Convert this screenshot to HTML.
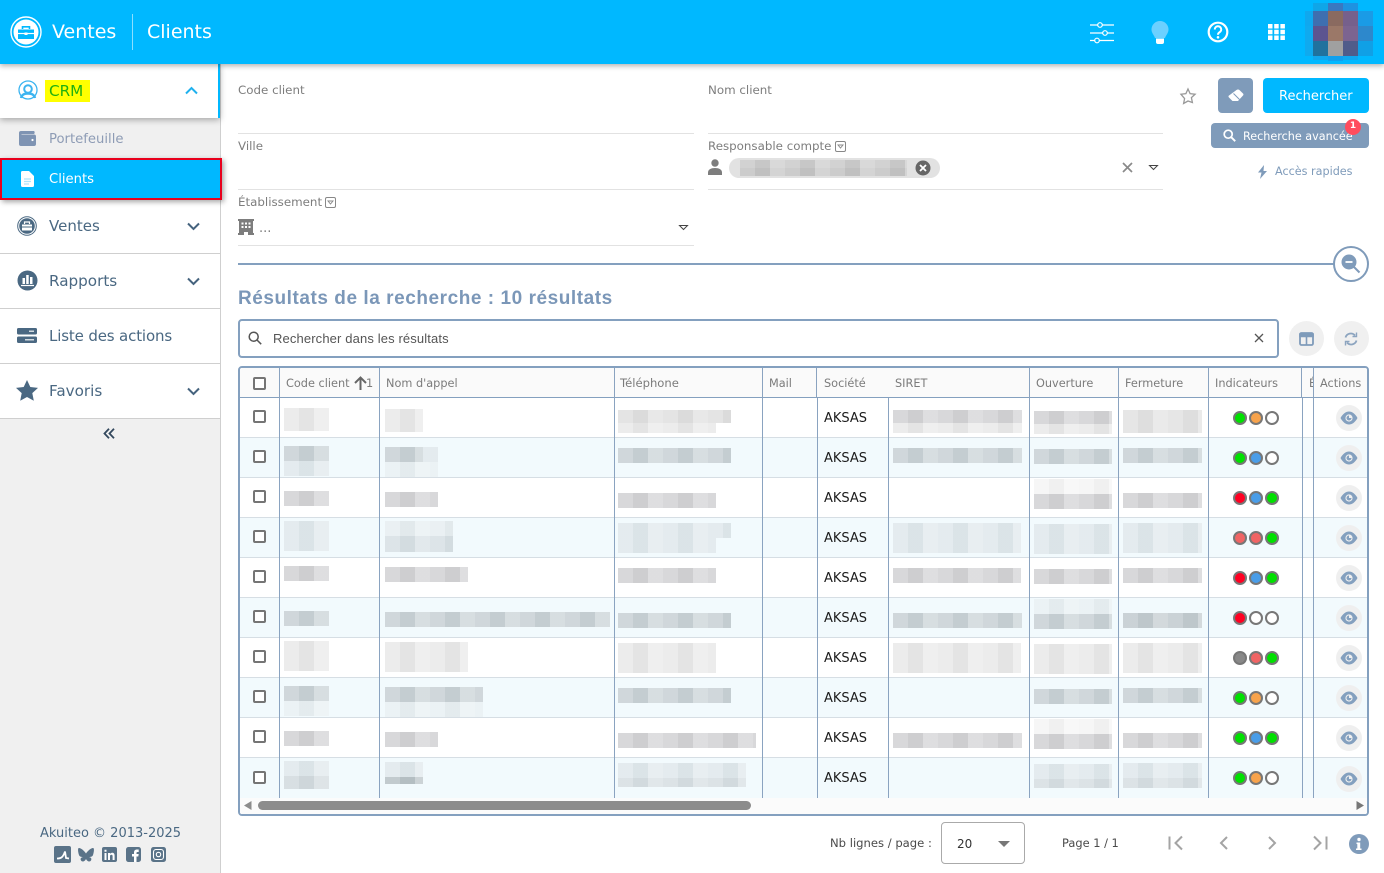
<!DOCTYPE html>
<html lang="fr"><head><meta charset="utf-8"><title>Clients</title>
<style>
*{box-sizing:border-box}
html,body{margin:0;padding:0;width:1384px;height:873px;overflow:hidden;background:#fff;font-family:"DejaVu Sans","Liberation Sans",sans-serif}
.t{position:absolute;white-space:nowrap;line-height:1;margin:0}
.x{position:absolute}
svg{position:absolute;overflow:visible}
#hd{position:absolute;left:0;top:0;width:1384px;height:64px;background:#00b8ff;box-shadow:0 2px 5px rgba(0,0,0,.3);z-index:5}
#sb{position:absolute;left:0;top:64px;width:221px;height:809px;background:#f0f0f0;border-right:1px solid #cfcfcf}
.sec{position:absolute;left:0;width:220px;background:#fff;border-bottom:1px solid #cfcfcf}
.m{color:#4a6882;font-size:15px}
.lb{color:#7d7d7d;font-size:11.85px}
.hr{position:absolute;height:1px;background:#e2e2e2}
.th{color:#7b7b7b;font-size:11.3px;top:378px;z-index:3}
.v{position:absolute;width:1px;background:#8aa3c0;z-index:3}
.r{position:absolute;left:240px;width:1127px;height:40px;border-bottom:1px solid #d6dee4}
.alt{background:#f2fafd}
.ck{position:absolute;left:254px;width:13px;height:13px;border:2px solid #757575;border-radius:2px;background:#fff;z-index:3}
.ak{position:absolute;left:824px;font-size:13px;line-height:1;color:#1c1c1c;z-index:3}
.d{position:absolute;width:14px;height:14px;border-radius:50%;border:2px solid #777;z-index:3}
.g{background:#00e000}.o{background:#f7a34c}.b{background:#4a9de8}.w{background:#fff}.rd{background:#ff0022}.s{background:#f06464}.gy{background:#888}
.e{position:absolute;left:1336px;width:26px;height:26px;border-radius:50%;background:#efefef;z-index:3}
.e svg{left:4px;top:6px}
u{position:absolute;display:block;text-decoration:none;background-image:repeating-linear-gradient(90deg,rgba(255,255,255,.14) 0 15px,rgba(0,0,0,.018) 15px 30px,rgba(255,255,255,.28) 30px 45px);z-index:2}
.A{background-color:#d2d2d4}.B{background-color:#e9e9e9}.C{background-color:#c8d1d5}.D{background-color:#dfe8ec}.F{background-color:#f5f5f5}
</style></head><body>

<div id="hd">
<svg style="left:10px;top:16px" width="32" height="32" viewBox="0 0 32 32"><circle cx="16" cy="16" r="15" fill="none" stroke="#fff" stroke-width="1.4"/><circle cx="16" cy="16" r="12.5" fill="#fff"/><path d="M8 13.5h16v9.5H8z" fill="#00b8ff"/><path d="M12.5 13v-2.2h7V13" fill="none" stroke="#00b8ff" stroke-width="1.6"/><path d="M8 17.5h16" stroke="#fff" stroke-width="1.2"/><path d="M14.5 16.5h3v2.5h-3z" fill="#fff"/></svg>
<div class="t" style="left:52px;top:23px;font-size:19px;color:#fff">Ventes</div>
<div class="x" style="left:132px;top:14px;width:1px;height:36px;background:rgba(255,255,255,.55)"></div>
<div class="t" style="left:147px;top:23px;font-size:19px;color:#fff">Clients</div>
<svg style="left:1090px;top:22px" width="24" height="22" viewBox="0 0 24 22" fill="none" stroke="#fff" stroke-width="1.2"><path d="M0 3h8M12 3h12M0 11h13M17 11h7M0 18.500h5M9 18.500h15"/><circle cx="10" cy="3" r="2.300"/><circle cx="15" cy="11" r="2.300"/><circle cx="7" cy="18.500" r="2.300"/></svg>
<svg style="left:1151px;top:20px" width="18" height="25" viewBox="0 0 18 25"><path d="M9 1a8.500 8.500 0 0 1 8.500 8.500c0 3.500-2.500 5.500-3.500 8.500H4C3 15 .5 13 .5 9.500A8.500 8.500 0 0 1 9 1z" fill="#6cd0ff"/><path d="M5 18.500h8v3.500a2 2 0 0 1-2 2H7a2 2 0 0 1-2-2z" fill="#fff"/></svg>
<svg style="left:1207px;top:21px" width="22" height="22" viewBox="0 0 22 22"><circle cx="11" cy="11" r="9.300" fill="none" stroke="#fff" stroke-width="2.200"/><path d="M7.800 8.500a3.200 3.200 0 1 1 4.800 2.700c-1.100.7-1.600 1.200-1.600 2.500" fill="none" stroke="#fff" stroke-width="2"/><circle cx="11" cy="16.300" r="1.300" fill="#fff"/></svg>
<svg style="left:1268px;top:24px" width="17" height="16" viewBox="0 0 17 16" fill="#fff"><path d="M0 0h4.500v4.500H0zM6.200 0h4.500v4.500H6.200zM12.400 0h4.500v4.500h-4.500zM0 5.800h4.500v4.500H0zM6.200 5.800h4.500v4.500H6.200zM12.400 5.800h4.500v4.500h-4.500zM0 11.500h4.500V16H0zM6.200 11.500h4.500V16H6.200zM12.400 11.500h4.500V16h-4.500z"/></svg>
<svg style="left:1305px;top:3px" width="68" height="58" viewBox="0 0 68 58" shape-rendering="crispEdges"><path fill="#0fa6e8" d="M8 0h15v8H8z"/><path fill="#3a78c0" d="M23 0h15v8H23z"/><path fill="#1f92e0" d="M38 0h15v8H38z"/><path fill="#10a8ee" d="M0 8h8v15H0z"/><path fill="#3e6fb0" d="M8 8h15v15H8z"/><path fill="#8a6a60" d="M23 8h15v15H23z"/><path fill="#76608c" d="M38 8h15v15H38z"/><path fill="#1a9be6" d="M53 8h15v15H53z"/><path fill="#10aaee" d="M0 23h8v15H0z"/><path fill="#5c5490" d="M8 23h15v15H8z"/><path fill="#9b7868" d="M23 23h15v15H23z"/><path fill="#7c6490" d="M38 23h15v15H38z"/><path fill="#2d88cc" d="M53 23h15v15H53z"/><path fill="#10aaee" d="M0 38h8v15H0z"/><path fill="#20729e" d="M8 38h15v15H8z"/><path fill="#a0a0a0" d="M23 38h15v15H23z"/><path fill="#505c8a" d="M38 38h15v15H38z"/><path fill="#10a0e6" d="M53 38h15v15H53z"/><path fill="#10a8ee" d="M8 53h15v4H8z"/><path fill="#10a0ee" d="M23 53h15v5H23z"/><path fill="#10a8ee" d="M38 53h15v4H38z"/></svg>
</div>

<div id="sb"></div>
<div class="x" style="left:0;top:200px;width:220px;height:218px;background:#fff"></div>
<div class="sec" style="top:64px;height:54px;width:220px;border:0;border-right:2px solid #00b8ff;box-shadow:0 2px 6px rgba(0,0,0,.3);z-index:2"></div>
<svg style="left:17px;top:80px;z-index:3" width="22" height="22" viewBox="0 0 22 22" fill="none" stroke="#3cb4f0"><circle cx="11" cy="10" r="9" stroke-width="1.300"/><circle cx="11" cy="9" r="3.800" stroke-width="2"/><path d="M4 18c1-4 4-4.500 7-4.500s6 .5 7 4.500" stroke-width="2.400"/></svg>
<div class="x" style="left:45px;top:80px;width:45px;height:22px;background:#ffff00;z-index:3"></div>
<div class="t" style="left:49px;top:84px;font-size:15.200px;color:#20b010;z-index:3">CRM</div>
<svg style="left:185px;top:86px;z-index:3" width="13" height="9" viewBox="0 0 13 9"><path d="M1 7.500L6.500 2 12 7.500" fill="none" stroke="#1fb1ee" stroke-width="2"/></svg>
<svg style="left:19px;top:131px" width="17" height="15" viewBox="0 0 17 15"><path d="M2 0h13a2 2 0 0 1 0 3H2.500v.5H15a2 2 0 0 1 2 2V13a2 2 0 0 1-2 2H2a2 2 0 0 1-2-2V2a2 2 0 0 1 2-2z" fill="#7f94b3"/><circle cx="13.500" cy="9" r="1.100" fill="#fff"/></svg>
<div class="t" style="left:49px;top:133px;font-size:13.200px;color:#8e9cb5">Portefeuille</div>
<div class="x" style="left:0;top:158px;width:222px;height:42px;background:#00b8ff;border:2px solid #e8001c;box-shadow:2px 2px 5px rgba(0,0,0,.35);z-index:3"></div>
<svg style="left:21px;top:171px;z-index:4" width="13" height="16" viewBox="0 0 13 16"><path d="M1.500 0H8l5 5v9.500A1.500 1.500 0 0 1 11.500 16h-10A1.500 1.500 0 0 1 0 14.500v-13A1.500 1.500 0 0 1 1.500 0z" fill="#fff"/><path d="M3 8h7M3 10.500h7M3 13h5" stroke="#aee4fb" stroke-width="1.200"/></svg>
<div class="t" style="left:49px;top:173px;font-size:13.200px;color:#fff;z-index:4">Clients</div>
<svg style="left:17px;top:216px" width="20" height="20" viewBox="0 0 20 20"><circle cx="10" cy="10" r="9.300" fill="none" stroke="#4a6882" stroke-width="1"/><circle cx="10" cy="10" r="7.800" fill="#4a6882"/><path d="M5 8.500h10v6H5z" fill="#fff"/><path d="M7.500 8V6h5v2" fill="none" stroke="#fff" stroke-width="1.200"/><path d="M5 11h10" stroke="#4a6882"/></svg>
<div class="t m" style="left:49px;top:219px">Ventes</div>
<svg style="left:187px;top:222px" width="13" height="9" viewBox="0 0 13 9"><path d="M1 1.500L6.500 7 12 1.500" fill="none" stroke="#45637e" stroke-width="2"/></svg>
<div class="hr" style="left:0;top:253px;width:220px;background:#cfcfcf"></div>
<svg style="left:17px;top:270px" width="21" height="21" viewBox="0 0 21 21"><circle cx="10.500" cy="10.500" r="10" fill="#4a6882"/><path d="M5.500 8h2.500v6H5.500zM9.200 5h2.500v9H9.200zM13 7h2.500v7H13z" fill="#fff"/><path d="M4 15.500h13" stroke="#fff" stroke-width="1.200"/></svg>
<div class="t m" style="left:49px;top:274px;font-size:15.200px">Rapports</div>
<svg style="left:187px;top:277px" width="13" height="9" viewBox="0 0 13 9"><path d="M1 1.500L6.500 7 12 1.500" fill="none" stroke="#45637e" stroke-width="2"/></svg>
<div class="hr" style="left:0;top:308px;width:220px;background:#cfcfcf"></div>
<svg style="left:17px;top:328px" width="20" height="15" viewBox="0 0 20 15"><rect width="20" height="6.500" rx="1.500" fill="#4a6882"/><rect y="8.500" width="20" height="6.500" rx="1.500" fill="#4a6882"/><path d="M12 3.200h5M8 11.800h9" stroke="#fff" stroke-width="1.200"/></svg>
<div class="t m" style="left:49px;top:329px;letter-spacing:-.15px">Liste des actions</div>
<div class="hr" style="left:0;top:363px;width:220px;background:#cfcfcf"></div>
<svg style="left:16px;top:380px" width="22" height="21" viewBox="0 0 22 21"><path d="M11 0l3.300 7 7.700.9-5.700 5.200 1.500 7.600L11 17l-6.800 3.700 1.500-7.600L0 7.900 7.700 7z" fill="#4a6882"/></svg>
<div class="t m" style="left:49px;top:384px;font-size:15.200px">Favoris</div>
<svg style="left:187px;top:387px" width="13" height="9" viewBox="0 0 13 9"><path d="M1 1.500L6.500 7 12 1.500" fill="none" stroke="#45637e" stroke-width="2"/></svg>
<div class="hr" style="left:0;top:418px;width:220px;background:#cfcfcf"></div>
<svg style="left:103px;top:428px" width="12" height="11" viewBox="0 0 12 11"><path d="M6 .8L1.500 5.500 6 10.200M11 .8L6.500 5.500 11 10.200" fill="none" stroke="#34495e" stroke-width="1.800"/></svg>
<div class="t" style="left:40px;top:827px;font-size:13px;color:#4a6882">Akuiteo © 2013-2025</div>
<svg style="left:54px;top:846px" width="114" height="18" viewBox="0 0 114 18"><rect width="17" height="17" rx="2" fill="#5a7388"/><path d="M3 12.500c4 0 6-1 8-7l1 6.500 3 .5" fill="none" stroke="#fff" stroke-width="1.800"/><path d="M32 7.500C30 4.500 27 2 25 2c-1.500 0-1 4 0 7 .5 1.500 2 2 4 2-2 .5-3 1.500-2 3.500 1 1.500 3.500 1.500 5-1.500 1.500 3 4 3 5 1.500 1-2 0-3-2-3.500 2 0 3.500-.5 4-2 1-3 1.500-7 0-7-2 0-5 2.500-7 5.500z" fill="#5a7388" transform="translate(0 0)"/><rect x="48" y="1" width="15" height="15" rx="2" fill="#5a7388"/><path d="M50.500 7h2v7h-2zM50.500 3.700h2v2h-2zM54 7h2v1c.5-.8 1.300-1.200 2.300-1.200 1.700 0 2.300 1.200 2.300 3V14h-2v-3.700c0-1-.3-1.600-1.200-1.600S56 9.300 56 10.300V14h-2z" fill="#fff"/><rect x="72" y="1" width="15" height="15" rx="2.500" fill="#5a7388"/><path d="M80 16v-5.500h-2V8h2V6.500C80 4.500 81.200 3.500 83 3.500h1.700V6h-1.200c-.8 0-1 .4-1 1v1h2.200l-.4 2.500h-1.800V16z" fill="#fff"/><rect x="97" y="1" width="15" height="15" rx="2.500" fill="#5a7388"/><rect x="99.500" y="3.500" width="10" height="10" rx="2.500" fill="none" stroke="#fff" stroke-width="1.100"/><circle cx="104.500" cy="8.500" r="2.200" fill="none" stroke="#fff" stroke-width="1.100"/></svg>

<!-- form -->
<div class="t lb" style="left:238px;top:85px">Code client</div>
<div class="t lb" style="left:708px;top:85px">Nom client</div>
<div class="hr" style="left:238px;top:133px;width:456px"></div>
<div class="hr" style="left:708px;top:133px;width:455px"></div>
<div class="t lb" style="left:238px;top:141px">Ville</div>
<div class="t lb" style="left:708px;top:141px">Responsable compte</div>
<svg style="left:835px;top:141px" width="11" height="11" viewBox="0 0 11 11"><rect x=".5" y=".5" width="10" height="10" rx="1.500" fill="none" stroke="#888"/><path d="M3 4h5L5.500 7z" fill="none" stroke="#888" stroke-width=".9"/></svg>
<svg style="left:708px;top:159px" width="14" height="16" viewBox="0 0 14 16" fill="#7d7d7d"><circle cx="7" cy="4" r="3.700"/><path d="M0 16v-2.500C0 10.500 3 9 7 9s7 1.500 7 4.500V16z"/></svg>
<div class="x" style="left:729px;top:158px;width:211px;height:20px;border-radius:10px;background:#e2e2e2"></div>
<u style="left:740px;top:160px;width:167px;height:8px;background-color:#cbcbcb"></u>
<u style="left:740px;top:168px;width:167px;height:8px;background-color:#c4c4c4"></u>
<svg style="left:915px;top:160px" width="16" height="16" viewBox="0 0 16 16"><circle cx="8" cy="8" r="7.500" fill="#666"/><path d="M5 5l6 6M11 5l-6 6" stroke="#fff" stroke-width="1.800"/></svg>
<svg style="left:1122px;top:162px" width="11" height="11" viewBox="0 0 11 11"><path d="M1 1l9 9M10 1l-9 9" stroke="#8a8a8a" stroke-width="1.700"/></svg>
<svg style="left:1149px;top:165px" width="9" height="5" viewBox="0 0 9 5"><path d="M.5.500h8L4.500 4.500z" fill="#fff" stroke="#444" stroke-width="1"/></svg>
<div class="hr" style="left:238px;top:189px;width:456px"></div>
<div class="hr" style="left:708px;top:189px;width:455px"></div>
<div class="t lb" style="left:238px;top:197px">Établissement</div>
<svg style="left:325px;top:197px" width="11" height="11" viewBox="0 0 11 11"><rect x=".5" y=".5" width="10" height="10" rx="1.500" fill="none" stroke="#888"/><path d="M3 4h5L5.500 7z" fill="none" stroke="#888" stroke-width=".9"/></svg>
<svg style="left:238px;top:219px" width="16" height="16" viewBox="0 0 16 16"><path d="M0 0h16v2h-1v12h1v2H10v-3H6v3H0v-2h1V2H0z" fill="#7d7d7d"/><path d="M3.500 3.500h2v2h-2zM7 3.500h2v2H7zM10.500 3.500h2v2h-2zM3.500 7h2v2h-2zM7 7h2v2H7zM10.500 7h2v2h-2z" fill="#fff"/></svg>
<div class="t" style="left:259px;top:222px;font-size:13px;color:#7d7d7d">...</div>
<svg style="left:679px;top:225px" width="9" height="5" viewBox="0 0 9 5"><path d="M.5.500h8L4.500 4.500z" fill="#fff" stroke="#444" stroke-width="1"/></svg>
<div class="hr" style="left:238px;top:245px;width:456px"></div>

<svg style="left:1180px;top:88px" width="16" height="16" viewBox="0 0 16 16"><path d="M8 1l2.100 4.600 5 .6-3.700 3.400 1 4.900L8 13l-4.400 2.500 1-4.900L.9 6.200l5-.6z" fill="none" stroke="#999" stroke-width="1.300"/></svg>
<div class="x" style="left:1218px;top:78px;width:35px;height:35px;border-radius:4px;background:#7f9bba"></div>
<svg style="left:1228px;top:89px" width="16" height="13" viewBox="0 0 16 13"><path d="M10 .5c.6 0 1 .2 1.400.5L15 4.500c.6.600.6 1.400 0 2L10 12H4.500L1 8.500c-.7-.7-.7-1.500 0-2L8.500 1c.4-.3 1-.5 1.500-.5z" fill="#fff"/><path d="M5.500 4.500l6 6" stroke="#7f9bba" stroke-width="1"/></svg>
<div class="x" style="left:1263px;top:78px;width:106px;height:35px;border-radius:4px;background:#00b8ff"></div>
<div class="t" style="left:1279px;top:90px;font-size:13px;color:#fff">Rechercher</div>
<div class="x" style="left:1211px;top:123px;width:158px;height:25px;border-radius:4px;background:#7f9bba"></div>
<svg style="left:1223px;top:129px" width="13" height="13" viewBox="0 0 13 13"><circle cx="5.200" cy="5.200" r="4" fill="none" stroke="#fff" stroke-width="1.700"/><path d="M8.200 8.200l4 4" stroke="#fff" stroke-width="1.900"/></svg>
<div class="t" style="left:1243px;top:131px;font-size:11.200px;color:#fff">Recherche avancée</div>
<div class="x" style="left:1345px;top:119px;width:16px;height:16px;border-radius:50%;background:#ff4d5e"></div>
<div class="t" style="left:1345px;top:122px;width:16px;text-align:center;font-size:9px;font-weight:bold;color:#fff">1</div>
<svg style="left:1257px;top:165px" width="11" height="14" viewBox="0 0 11 14"><path d="M7 0L1 7.500h3.500L3 14l7-8H6.500z" fill="#7f9bba"/></svg>
<div class="t" style="left:1275px;top:166px;font-size:11.200px;color:#7f9bba">Accès rapides</div>

<div class="x" style="left:238px;top:263px;width:1096px;height:2px;background:#84a0bf"></div>
<div class="x" style="left:1333px;top:246px;width:36px;height:36px;border:2px solid #7f9bba;border-radius:50%;background:#fff"></div>
<svg style="left:1341px;top:254px" width="20" height="20" viewBox="0 0 20 20"><circle cx="8" cy="8" r="7.500" fill="#7f9bba"/><path d="M4.500 8h7" stroke="#fff" stroke-width="1.800"/><path d="M13 13l5.500 5.500" stroke="#7f9bba" stroke-width="2"/></svg>
<div class="t" style="left:238px;top:289px;font-size:19px;font-weight:bold;color:#7b97b8;font-family:'Liberation Sans',sans-serif;letter-spacing:.55px">Résultats de la recherche : 10 résultats</div>

<div class="x" style="left:238px;top:319px;width:1041px;height:39px;border:2px solid #84a0bf;border-radius:4px"></div>
<svg style="left:248px;top:331px" width="14" height="14" viewBox="0 0 14 14"><circle cx="5.700" cy="5.700" r="4.500" fill="none" stroke="#555" stroke-width="1.500"/><path d="M9 9l4.200 4.200" stroke="#555" stroke-width="1.500"/></svg>
<div class="t" style="left:273px;top:332px;font-size:13px;color:#555;font-family:'Liberation Sans',sans-serif;letter-spacing:.13px">Rechercher dans les résultats</div>
<svg style="left:1254px;top:333px" width="10" height="10" viewBox="0 0 10 10"><path d="M1 1l8 8M9 1l-8 8" stroke="#555" stroke-width="1.300"/></svg>
<div class="x" style="left:1289px;top:321px;width:35px;height:35px;border-radius:50%;background:#f0f0f0"></div>
<svg style="left:1299px;top:332px" width="15" height="14" viewBox="0 0 15 14"><rect x="1" y="1" width="13" height="12" rx="1.500" fill="none" stroke="#7f9bba" stroke-width="1.800"/><path d="M1 2h13v2.500H1zM7.500 3v10" stroke="#7f9bba" stroke-width="1.600" fill="#7f9bba"/></svg>
<div class="x" style="left:1334px;top:321px;width:35px;height:35px;border-radius:50%;background:#f0f0f0"></div>
<svg style="left:1344px;top:332px" width="14" height="14" viewBox="0 0 14 14" fill="none" stroke="#8ca4bf" stroke-width="1.800"><path d="M1.500 5.500A5.500 5.500 0 0 1 11 3.500M12.500 8.500A5.500 5.500 0 0 1 3 10.500"/><path d="M12.500.5v4h-4M1.500 13.500v-4h4" stroke-width="1.400"/></svg>

<!-- table -->
<div class="x" style="left:238px;top:366px;width:1131px;height:450px;border:2px solid #84a0bf;border-radius:4px;overflow:hidden;z-index:1">
<div class="x" style="left:0;top:0;width:1127px;height:30px;background:#fafafa;border-bottom:1px solid #84a0bf"></div>
<div class="x" style="left:0;top:430px;width:1127px;height:16px;background:#fbfbfb"></div>
</div>
<div class="r" style="top:398px"></div><div class="r alt" style="top:438px"></div><div class="r" style="top:478px"></div><div class="r alt" style="top:518px"></div><div class="r" style="top:558px"></div><div class="r alt" style="top:598px"></div><div class="r" style="top:638px"></div><div class="r alt" style="top:678px"></div><div class="r" style="top:718px"></div><div class="r alt" style="top:758px;border:0"></div>

<div class="v" style="left:279px;top:368px;height:430px"></div>
<div class="v" style="left:379px;top:368px;height:430px"></div>
<div class="v" style="left:614px;top:368px;height:430px"></div>
<div class="v" style="left:762px;top:368px;height:430px"></div>
<div class="v" style="left:816px;top:368px;height:30px"></div><div class="v" style="left:817px;top:398px;height:400px"></div>
<div class="v" style="left:888px;top:398px;height:400px"></div>
<div class="v" style="left:1029px;top:368px;height:430px"></div>
<div class="v" style="left:1118px;top:368px;height:430px"></div>
<div class="v" style="left:1208px;top:368px;height:430px"></div>
<div class="v" style="left:1301px;top:368px;height:30px"></div><div class="v" style="left:1302px;top:398px;height:400px"></div>
<div class="v" style="left:1313px;top:368px;height:430px"></div>

<div class="ck" style="top:377px;left:253px"></div>
<div class="t th" style="left:286px">Code client</div>
<svg style="left:354px;top:376px;z-index:3" width="13" height="14" viewBox="0 0 13 14"><path d="M6.500 14V2M1 7l5.500-5.500L12 7" fill="none" stroke="#666" stroke-width="2"/></svg>
<div class="t th" style="left:366px">1</div>
<div class="t th" style="left:386px">Nom d'appel</div>
<div class="t th" style="left:620px;font-size:11.6px">Téléphone</div>
<div class="t th" style="left:769px">Mail</div>
<div class="t th" style="left:824px">Société</div>
<div class="t th" style="left:895px">SIRET</div>
<div class="t th" style="left:1036px">Ouverture</div>
<div class="t th" style="left:1125px">Fermeture</div>
<div class="t th" style="left:1215px">Indicateurs</div>
<div class="x" style="left:1302px;top:368px;width:11px;height:29px;overflow:hidden;z-index:3"><div class="t" style="left:7px;top:10px;font-size:11.200px;color:#7b7b7b">État</div></div>
<div class="t th" style="left:1320px">Actions</div>

<!-- blurred cells -->
<u class="B" style="left:284px;top:408px;width:45px;height:23px"></u>
<u class="B" style="left:385px;top:409px;width:38px;height:23px"></u>
<u class="B" style="left:618px;top:410px;width:113px;height:13px;background-color:#dfdfdf"></u><u class="B" style="left:618px;top:423px;width:98px;height:10px"></u>
<u class="A" style="left:893px;top:410px;width:129px;height:13px"></u><u class="B" style="left:893px;top:423px;width:129px;height:10px"></u>
<u class="A" style="left:1034px;top:411px;width:78px;height:13px"></u><u class="B" style="left:1034px;top:424px;width:78px;height:10px"></u>
<u class="B" style="left:1123px;top:410px;width:79px;height:23px;background-color:#e2e2e2"></u>

<u class="C" style="left:284px;top:446px;width:45px;height:15px"></u><u class="D" style="left:284px;top:461px;width:45px;height:15px"></u>
<u class="C" style="left:385px;top:447px;width:38px;height:15px"></u><u class="D" style="left:423px;top:447px;width:15px;height:15px"></u><u class="D" style="left:385px;top:462px;width:53px;height:15px;background-color:#e8f0f3"></u>
<u class="C" style="left:618px;top:448px;width:113px;height:15px"></u>
<u class="C" style="left:893px;top:448px;width:129px;height:15px"></u>
<u class="C" style="left:1034px;top:449px;width:78px;height:15px"></u>
<u class="C" style="left:1123px;top:448px;width:79px;height:15px"></u>

<u class="A" style="left:284px;top:491px;width:45px;height:15px"></u>
<u class="A" style="left:385px;top:492px;width:53px;height:15px"></u>
<u class="A" style="left:618px;top:493px;width:98px;height:15px"></u>
<u class="F" style="left:1034px;top:479px;width:78px;height:15px"></u><u class="A" style="left:1034px;top:494px;width:78px;height:15px"></u>
<u class="A" style="left:1123px;top:493px;width:79px;height:15px"></u>

<u class="D" style="left:284px;top:521px;width:45px;height:30px"></u>
<u class="D" style="left:385px;top:521px;width:68px;height:15px;background-color:#e6eef1"></u><u class="D" style="left:385px;top:536px;width:68px;height:16px;background-color:#d7e0e4"></u>
<u class="D" style="left:618px;top:523px;width:113px;height:15px"></u><u class="D" style="left:618px;top:538px;width:98px;height:15px"></u>
<u class="D" style="left:893px;top:523px;width:128px;height:30px"></u>
<u class="D" style="left:1034px;top:524px;width:78px;height:30px"></u>
<u class="D" style="left:1123px;top:523px;width:79px;height:30px"></u>

<u class="A" style="left:284px;top:566px;width:45px;height:15px"></u>
<u class="A" style="left:385px;top:567px;width:83px;height:15px"></u>
<u class="A" style="left:618px;top:568px;width:98px;height:15px"></u>
<u class="A" style="left:893px;top:568px;width:128px;height:15px"></u>
<u class="A" style="left:1034px;top:569px;width:78px;height:15px"></u>
<u class="A" style="left:1123px;top:568px;width:79px;height:15px"></u>

<u class="C" style="left:284px;top:611px;width:45px;height:15px"></u>
<u class="C" style="left:385px;top:612px;width:225px;height:15px"></u>
<u class="C" style="left:618px;top:613px;width:113px;height:15px"></u>
<u class="C" style="left:893px;top:613px;width:129px;height:15px"></u>
<u class="D" style="left:1034px;top:599px;width:78px;height:15px;background-color:#e8f0f3"></u><u class="C" style="left:1034px;top:614px;width:78px;height:15px"></u>
<u class="C" style="left:1123px;top:613px;width:79px;height:15px;background-color:#c2cbcf"></u>

<u class="B" style="left:284px;top:641px;width:45px;height:30px"></u>
<u class="B" style="left:385px;top:642px;width:83px;height:30px"></u>
<u class="B" style="left:618px;top:643px;width:98px;height:30px"></u>
<u class="B" style="left:893px;top:643px;width:128px;height:30px"></u>
<u class="B" style="left:1034px;top:644px;width:78px;height:30px"></u>
<u class="B" style="left:1123px;top:643px;width:79px;height:30px"></u>

<u class="C" style="left:284px;top:686px;width:45px;height:15px"></u><u class="D" style="left:284px;top:701px;width:45px;height:15px;background-color:#e8f0f3"></u>
<u class="C" style="left:385px;top:687px;width:98px;height:15px"></u><u class="D" style="left:385px;top:702px;width:98px;height:15px;background-color:#e8f0f3"></u>
<u class="C" style="left:618px;top:688px;width:113px;height:15px"></u>
<u class="C" style="left:1034px;top:689px;width:78px;height:15px"></u>
<u class="C" style="left:1123px;top:688px;width:79px;height:15px"></u>

<u class="A" style="left:284px;top:731px;width:45px;height:15px"></u>
<u class="A" style="left:385px;top:732px;width:53px;height:15px"></u>
<u class="A" style="left:618px;top:733px;width:138px;height:15px"></u>
<u class="A" style="left:893px;top:733px;width:129px;height:15px"></u>
<u class="F" style="left:1034px;top:719px;width:78px;height:15px"></u><u class="A" style="left:1034px;top:734px;width:78px;height:15px"></u>
<u class="A" style="left:1123px;top:733px;width:79px;height:15px"></u>

<u class="D" style="left:284px;top:761px;width:45px;height:15px"></u><u class="C" style="left:284px;top:776px;width:45px;height:13px;background-color:#d2dade"></u>
<u class="D" style="left:385px;top:762px;width:38px;height:15px"></u><u class="C" style="left:385px;top:777px;width:38px;height:7px;background-color:#b8c2c6"></u>
<u class="D" style="left:618px;top:763px;width:128px;height:15px"></u><u class="C" style="left:618px;top:778px;width:128px;height:9px;background-color:#d6dee2"></u>
<u class="D" style="left:1034px;top:764px;width:78px;height:15px"></u><u class="C" style="left:1034px;top:779px;width:78px;height:9px;background-color:#d6dee2"></u>
<u class="D" style="left:1123px;top:763px;width:79px;height:15px"></u><u class="C" style="left:1123px;top:778px;width:79px;height:10px;background-color:#d6dee2"></u>

<!-- rows -->
<div class="ck" style="top:410px;left:253px"></div><div class="ak" style="top:412px">AKSAS</div><div class="d g" style="left:1233px;top:411px"></div><div class="d o" style="left:1249px;top:411px"></div><div class="d w" style="left:1265px;top:411px"></div><div class="e" style="top:405px"><svg width="18" height="14" viewBox="0 0 18 14"><path d="M.5 7C3 2.500 6 .5 9 .5s6 2 8.500 6.500C15 11.500 12 13.500 9 13.500S3 11.500.5 7z" fill="#84a0bf"/><circle cx="9" cy="7" r="3.600" fill="#efefef"/><path d="M9 7l2.500 0a2.500 2.500 0 1 1-2.500-2.500z" fill="#84a0bf"/></svg></div>
<div class="ck" style="top:450px;left:253px"></div><div class="ak" style="top:452px">AKSAS</div><div class="d g" style="left:1233px;top:451px"></div><div class="d b" style="left:1249px;top:451px"></div><div class="d w" style="left:1265px;top:451px"></div><div class="e" style="top:445px"><svg width="18" height="14" viewBox="0 0 18 14"><path d="M.5 7C3 2.500 6 .5 9 .5s6 2 8.500 6.500C15 11.500 12 13.500 9 13.500S3 11.500.5 7z" fill="#84a0bf"/><circle cx="9" cy="7" r="3.600" fill="#efefef"/><path d="M9 7l2.500 0a2.500 2.500 0 1 1-2.500-2.500z" fill="#84a0bf"/></svg></div>
<div class="ck" style="top:490px;left:253px"></div><div class="ak" style="top:492px">AKSAS</div><div class="d rd" style="left:1233px;top:491px"></div><div class="d b" style="left:1249px;top:491px"></div><div class="d g" style="left:1265px;top:491px"></div><div class="e" style="top:485px"><svg width="18" height="14" viewBox="0 0 18 14"><path d="M.5 7C3 2.500 6 .5 9 .5s6 2 8.500 6.500C15 11.500 12 13.500 9 13.500S3 11.500.5 7z" fill="#84a0bf"/><circle cx="9" cy="7" r="3.600" fill="#efefef"/><path d="M9 7l2.500 0a2.500 2.500 0 1 1-2.500-2.500z" fill="#84a0bf"/></svg></div>
<div class="ck" style="top:530px;left:253px"></div><div class="ak" style="top:532px">AKSAS</div><div class="d s" style="left:1233px;top:531px"></div><div class="d s" style="left:1249px;top:531px"></div><div class="d g" style="left:1265px;top:531px"></div><div class="e" style="top:525px"><svg width="18" height="14" viewBox="0 0 18 14"><path d="M.5 7C3 2.500 6 .5 9 .5s6 2 8.500 6.500C15 11.500 12 13.500 9 13.500S3 11.500.5 7z" fill="#84a0bf"/><circle cx="9" cy="7" r="3.600" fill="#efefef"/><path d="M9 7l2.500 0a2.500 2.500 0 1 1-2.500-2.500z" fill="#84a0bf"/></svg></div>
<div class="ck" style="top:570px;left:253px"></div><div class="ak" style="top:572px">AKSAS</div><div class="d rd" style="left:1233px;top:571px"></div><div class="d b" style="left:1249px;top:571px"></div><div class="d g" style="left:1265px;top:571px"></div><div class="e" style="top:565px"><svg width="18" height="14" viewBox="0 0 18 14"><path d="M.5 7C3 2.500 6 .5 9 .5s6 2 8.500 6.500C15 11.500 12 13.500 9 13.500S3 11.500.5 7z" fill="#84a0bf"/><circle cx="9" cy="7" r="3.600" fill="#efefef"/><path d="M9 7l2.500 0a2.500 2.500 0 1 1-2.500-2.500z" fill="#84a0bf"/></svg></div>
<div class="ck" style="top:610px;left:253px"></div><div class="ak" style="top:612px">AKSAS</div><div class="d rd" style="left:1233px;top:611px"></div><div class="d w" style="left:1249px;top:611px"></div><div class="d w" style="left:1265px;top:611px"></div><div class="e" style="top:605px"><svg width="18" height="14" viewBox="0 0 18 14"><path d="M.5 7C3 2.500 6 .5 9 .5s6 2 8.500 6.500C15 11.500 12 13.500 9 13.500S3 11.500.5 7z" fill="#84a0bf"/><circle cx="9" cy="7" r="3.600" fill="#efefef"/><path d="M9 7l2.500 0a2.500 2.500 0 1 1-2.500-2.500z" fill="#84a0bf"/></svg></div>
<div class="ck" style="top:650px;left:253px"></div><div class="ak" style="top:652px">AKSAS</div><div class="d gy" style="left:1233px;top:651px"></div><div class="d s" style="left:1249px;top:651px"></div><div class="d g" style="left:1265px;top:651px"></div><div class="e" style="top:645px"><svg width="18" height="14" viewBox="0 0 18 14"><path d="M.5 7C3 2.500 6 .5 9 .5s6 2 8.500 6.500C15 11.500 12 13.500 9 13.500S3 11.500.5 7z" fill="#84a0bf"/><circle cx="9" cy="7" r="3.600" fill="#efefef"/><path d="M9 7l2.500 0a2.500 2.500 0 1 1-2.500-2.500z" fill="#84a0bf"/></svg></div>
<div class="ck" style="top:690px;left:253px"></div><div class="ak" style="top:692px">AKSAS</div><div class="d g" style="left:1233px;top:691px"></div><div class="d o" style="left:1249px;top:691px"></div><div class="d w" style="left:1265px;top:691px"></div><div class="e" style="top:685px"><svg width="18" height="14" viewBox="0 0 18 14"><path d="M.5 7C3 2.500 6 .5 9 .5s6 2 8.500 6.500C15 11.500 12 13.500 9 13.500S3 11.500.5 7z" fill="#84a0bf"/><circle cx="9" cy="7" r="3.600" fill="#efefef"/><path d="M9 7l2.500 0a2.500 2.500 0 1 1-2.500-2.500z" fill="#84a0bf"/></svg></div>
<div class="ck" style="top:730px;left:253px"></div><div class="ak" style="top:732px">AKSAS</div><div class="d g" style="left:1233px;top:731px"></div><div class="d b" style="left:1249px;top:731px"></div><div class="d g" style="left:1265px;top:731px"></div><div class="e" style="top:725px"><svg width="18" height="14" viewBox="0 0 18 14"><path d="M.5 7C3 2.500 6 .5 9 .5s6 2 8.500 6.500C15 11.500 12 13.500 9 13.500S3 11.500.5 7z" fill="#84a0bf"/><circle cx="9" cy="7" r="3.600" fill="#efefef"/><path d="M9 7l2.500 0a2.500 2.500 0 1 1-2.500-2.500z" fill="#84a0bf"/></svg></div>
<div class="ck" style="top:771px;left:253px"></div><div class="ak" style="top:772px">AKSAS</div><div class="d g" style="left:1233px;top:771px"></div><div class="d o" style="left:1249px;top:771px"></div><div class="d w" style="left:1265px;top:771px"></div><div class="e" style="top:766px"><svg width="18" height="14" viewBox="0 0 18 14"><path d="M.5 7C3 2.500 6 .5 9 .5s6 2 8.500 6.500C15 11.500 12 13.500 9 13.500S3 11.500.5 7z" fill="#84a0bf"/><circle cx="9" cy="7" r="3.600" fill="#efefef"/><path d="M9 7l2.500 0a2.500 2.500 0 1 1-2.500-2.500z" fill="#84a0bf"/></svg></div>

<svg style="left:244px;top:801px;z-index:3" width="8" height="9" viewBox="0 0 8 9"><path d="M7.500 0v9L0 4.500z" fill="#8c8c8c"/></svg>
<div class="x" style="left:258px;top:801px;width:493px;height:9px;border-radius:5px;background:#8c8c8c;z-index:3"></div>
<svg style="left:1356px;top:801px;z-index:3" width="8" height="9" viewBox="0 0 8 9"><path d="M.5 0v9L8 4.500z" fill="#777"/></svg>

<!-- pagination -->
<div class="t" style="left:830px;top:838px;font-size:11.6px;color:#4a4a4a">Nb lignes / page :</div>
<div class="x" style="left:941px;top:822px;width:84px;height:42px;border:1px solid #aaa;border-radius:4px"></div>
<div class="t" style="left:957px;top:838px;font-size:12px;color:#333">20</div>
<svg style="left:998px;top:841px" width="12" height="6" viewBox="0 0 12 6"><path d="M0 0h12L6 6z" fill="#777"/></svg>
<div class="t" style="left:1062px;top:838px;font-size:11.4px;color:#4a4a4a">Page 1 / 1</div>
<svg style="left:1168px;top:835px" width="160" height="16" viewBox="0 0 160 16" fill="none" stroke="#a4a4a4" stroke-width="2"><path d="M1.500 1.500v13M14 1.500L7.500 8l6.500 6.500M59 2l-6 6 6 6M101 2l6 6-6 6M146 1.500l6.500 6.500-6.500 6.500M158.500 1.500v13"/></svg>
<svg style="left:1349px;top:834px" width="20" height="20" viewBox="0 0 20 20"><circle cx="10" cy="10" r="10" fill="#7f9bba"/><circle cx="10" cy="5.500" r="1.700" fill="#fff"/><path d="M7.500 8.500h3.700v6h1.300v1.500h-5.500v-1.500h1.300v-4.500H7.500z" fill="#fff"/></svg>
</body></html>
